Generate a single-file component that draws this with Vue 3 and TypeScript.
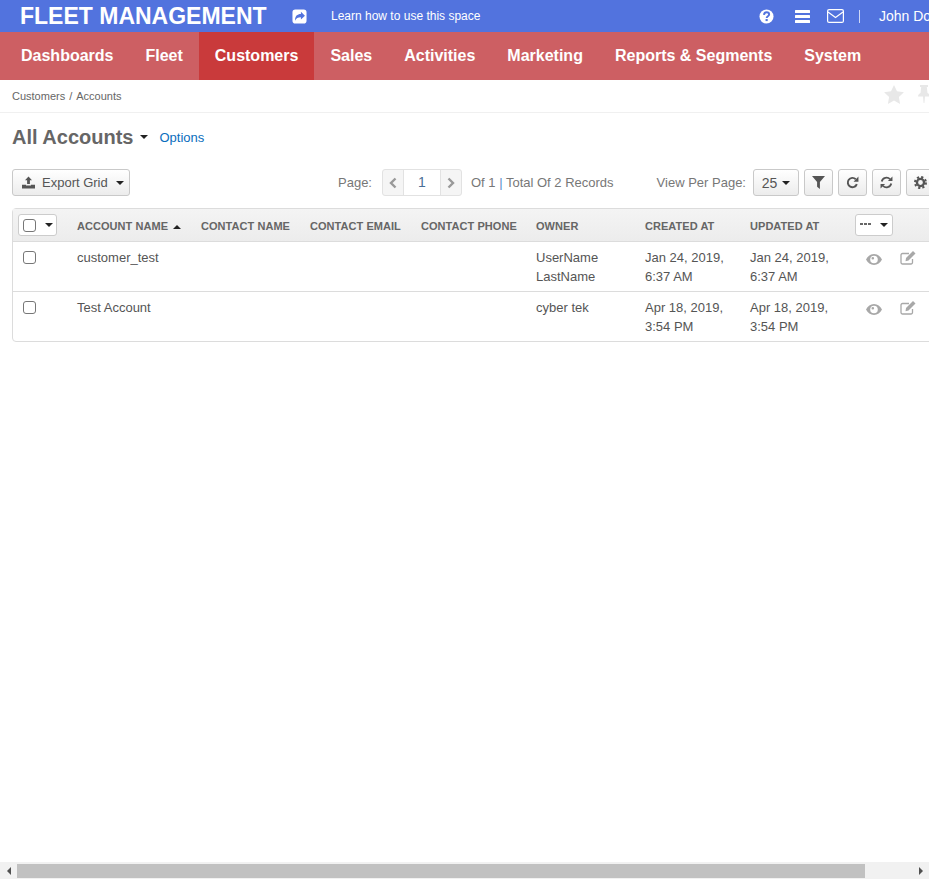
<script setup lang="ts">
interface Account {
  name: string;
  owner: string[];
  created: string[];
  updated: string[];
}

const navItems = ["Dashboards", "Fleet", "Customers", "Sales", "Activities", "Marketing", "Reports & Segments", "System"];
const columns = ["Contact Name", "Contact Email", "Contact Phone", "Owner", "Created At", "Updated At"];

const accounts: Account[] = [
  {
    name: "customer_test",
    owner: ["UserName", "LastName"],
    created: ["Jan 24, 2019,", "6:37 AM"],
    updated: ["Jan 24, 2019,", "6:37 AM"],
  },
  {
    name: "Test Account",
    owner: ["cyber tek"],
    created: ["Apr 18, 2019,", "3:54 PM"],
    updated: ["Apr 18, 2019,", "3:54 PM"],
  },
];
</script>

<template>
  <div class="page">
    <div class="content">
      <header class="topbar">
        <span class="logo">FLEET MANAGEMENT</span>
        <svg class="share" viewBox="0 0 16 16">
          <path fill="#fff" fill-rule="evenodd" d="M3.500 .5h9A3 3 0 0 1 15.500 3.500v9a3 3 0 0 1-3 3h-9a3 3 0 0 1-3-3v-9a3 3 0 0 1 3-3zM9.500 2.800v2.500C5.500 5.400 3.200 7.300 3.200 12.500c1-2.600 3.200-3.800 6.300-3.800v2.600l4.300-4.200z" />
        </svg>
        <span class="learn">Learn how to use this space</span>
        <svg class="help" viewBox="0 0 16 16">
          <circle cx="8" cy="8" r="7.500" fill="#fff" />
          <path d="M5.300 6.200C5.500 4.500 6.700 3.500 8.100 3.500c1.500 0 2.700 1 2.700 2.400 0 1.900-2.600 1.900-2.600 3.700" fill="none" stroke="#5273de" stroke-width="2.100" />
          <rect x="7" y="10.700" width="2.300" height="2.200" fill="#5273de" />
        </svg>
        <svg class="bars" viewBox="0 0 15 13">
          <rect y="0" width="15" height="3" rx=".5" fill="#fff" />
          <rect y="5" width="15" height="3" rx=".5" fill="#fff" />
          <rect y="10" width="15" height="3" rx=".5" fill="#fff" />
        </svg>
        <svg class="mail" viewBox="0 0 17 14">
          <rect x=".6" y=".6" width="15.800" height="12.800" rx="1.500" fill="none" stroke="#fff" stroke-width="1.200" />
          <path d="M1 3l7.500 5.500L16 3" fill="none" stroke="#fff" stroke-width="1.200" />
        </svg>
        <span class="divider"></span>
        <span class="user">John Doe</span>
      </header>

      <nav class="mainnav">
        <a v-for="item in navItems" :key="item" class="navitem" :class="{ active: item === 'Customers' }">{{ item }}</a>
      </nav>

      <div class="crumbs">
        <span>Customers</span>
        <span class="sep">/</span>
        <span>Accounts</span>
        <svg class="star" viewBox="0 0 20 19">
          <path fill="#e8e8e8" d="M10 0l3 6.300 6.900.9-5 4.800 1.200 6.900L10 15.600l-6.100 3.300L5.100 12l-5-4.800 6.900-.9z" />
        </svg>
        <svg class="pin" viewBox="0 0 14 20">
          <path fill="#e8e8e8" d="M3 0h8v2H9.800l.7 6c1.600.8 2.500 2 2.500 3.500H8l-.6 6.500h-.8L6 11.500H1C1 10 1.900 8.800 3.500 8l.7-6H3z" />
        </svg>
      </div>

      <div class="titlebar">
        <h1>All Accounts</h1>
        <span class="caret title-caret"></span>
        <a class="options">Options</a>
      </div>

      <div class="toolbar">
        <button class="btn export">
          <svg class="ico" viewBox="0 0 14 13">
            <path fill="#555" d="M7 0l3.800 4H8.500v4.200h-3V4H3.200zM0 9h4.300v.8h5.400V9H14v4H0z" />
          </svg>
          Export Grid
          <span class="caret"></span>
        </button>

        <span class="label page-label">Page:</span>
        <div class="pager">
          <span class="pager-arrow">
            <svg viewBox="0 0 8 12"><path d="M6.500 1.500L2 6l4.500 4.500" fill="none" stroke="#999" stroke-width="2.400" /></svg>
          </span>
          <span class="pager-num">1</span>
          <span class="pager-arrow">
            <svg viewBox="0 0 8 12"><path d="M1.500 1.500L6 6l-4.500 4.500" fill="none" stroke="#999" stroke-width="2.400" /></svg>
          </span>
        </div>
        <span class="label total">Of 1 <i>|</i> Total Of 2 Records</span>

        <span class="label per-label">View Per Page:</span>
        <button class="btn per">25 <span class="caret"></span></button>
        <button class="btn square">
          <svg class="ico" viewBox="0 0 12 12"><path fill="#555" d="M0 0h12L7.300 5.500V12L4.700 10V5.500z" /></svg>
        </button>
        <button class="btn square">
          <svg class="ico" viewBox="0 0 12 12">
            <path d="M10 7.500A4.300 4.300 0 1 1 9 3" fill="none" stroke="#555" stroke-width="1.800" />
            <path fill="#555" d="M11.500.5v4.700H7z" />
          </svg>
        </button>
        <button class="btn square">
          <svg class="ico" viewBox="0 0 12 12">
            <path d="M1.600 5A4.500 4.500 0 0 1 9.300 3M10.400 7A4.500 4.500 0 0 1 2.700 9" fill="none" stroke="#555" stroke-width="1.700" />
            <path fill="#555" d="M11.500.5v4.200H7.300zM.5 11.500V7.300h4.200z" />
          </svg>
        </button>
        <button class="btn square">
          <svg class="ico" viewBox="0 0 12 12">
            <circle cx="6" cy="6" r="3.300" fill="none" stroke="#555" stroke-width="2.200" />
            <circle cx="6" cy="6" r="5" fill="none" stroke="#555" stroke-width="2" stroke-dasharray="2 1.930" />
          </svg>
        </button>
      </div>

      <div class="grid">
        <div class="row head">
          <div class="cell check">
            <span class="check-drop">
              <span class="box"></span>
              <span class="caret"></span>
            </span>
          </div>
          <div class="cell name label-cell">Account Name <span class="caret up"></span></div>
          <div v-for="col in columns" :key="col" class="cell label-cell">{{ col }}</div>
          <div class="cell acts">
            <span class="more">
              <svg class="dots" viewBox="0 0 11 2">
                <rect width="3" height="2" fill="#666" />
                <rect x="4" width="3" height="2" fill="#666" />
                <rect x="8" width="3" height="2" fill="#666" />
              </svg>
              <span class="caret"></span>
            </span>
          </div>
        </div>

        <div v-for="acc in accounts" :key="acc.name" class="row body">
          <div class="cell check"><span class="box"></span></div>
          <div class="cell name">{{ acc.name }}</div>
          <div class="cell"></div>
          <div class="cell"></div>
          <div class="cell"></div>
          <div class="cell"><div v-for="line in acc.owner" :key="line">{{ line }}</div></div>
          <div class="cell"><div v-for="line in acc.created" :key="line">{{ line }}</div></div>
          <div class="cell"><div v-for="line in acc.updated" :key="line">{{ line }}</div></div>
          <div class="cell acts icons">
            <svg class="eye" viewBox="0 0 16 11">
              <path fill="#a8a8a8" fill-rule="evenodd" d="M8 0c3.500 0 6.300 2.100 8 5.500C14.300 8.900 11.500 11 8 11S1.700 8.900 0 5.500C1.700 2.100 4.500 0 8 0zM8 1.700a3.800 3.800 0 1 0 0 7.600 3.800 3.800 0 0 0 0-7.600zM6.800 3a1.300 1.300 0 1 1 0 2.600 1.300 1.300 0 0 1 0-2.600z" />
            </svg>
            <svg class="edit" viewBox="0 0 16 14">
              <path d="M12.500 8v3.500a1.500 1.500 0 0 1-1.500 1.500H2.500A1.500 1.500 0 0 1 1 11.500V4a1.500 1.500 0 0 1 1.500-1.500H9" fill="none" stroke="#a8a8a8" stroke-width="1.300" />
              <path fill="#a8a8a8" d="M13 0l2.500 2.500L8.500 9.500 5.500 10.300 6 7z" />
            </svg>
          </div>
        </div>
      </div>
    </div>

    <div class="scrollbar">
      <span class="sb-btn"><span class="sb-arrow left"></span></span>
      <span class="sb-track"><span class="sb-thumb"></span></span>
      <span class="sb-btn"><span class="sb-arrow right"></span></span>
    </div>
  </div>
</template>

<style scoped>
.page {
  position: relative;
  width: 929px;
  height: 879px;
  overflow: hidden;
  font-family: "Liberation Sans", Arial, sans-serif;
  color: #555;
  background: #fff;
}

.content {
  width: 980px;
}

.topbar {
  display: flex;
  align-items: center;
  height: 32px;
  background: #5273de;
  color: #fff;
}

.logo {
  margin-left: 20px;
  width: 272px;
  font-size: 23px;
  font-weight: 700;
  white-space: nowrap;
}

.share {
  width: 15px;
  height: 15px;
}

.learn {
  margin-left: 24px;
  width: 428px;
  font-size: 12px;
}

.help {
  width: 15px;
  height: 15px;
}

.bars {
  margin-left: 21px;
  width: 15px;
  height: 13px;
}

.mail {
  margin-left: 17px;
  width: 17px;
  height: 14px;
}

.divider {
  margin-left: 15px;
  width: 1px;
  height: 13px;
  background: #cfd8f6;
}

.user {
  margin-left: 19px;
  font-size: 14px;
}

.mainnav {
  display: flex;
  height: 48px;
  padding-left: 5px;
  background: #cd5f63;
}

.navitem {
  display: flex;
  align-items: center;
  padding: 0 16px;
  font-size: 16px;
  font-weight: 700;
  color: #fff;
  white-space: nowrap;
}

.navitem.active {
  background: #c93a3b;
}

.crumbs {
  display: flex;
  align-items: center;
  gap: 4px;
  height: 32px;
  padding-left: 12px;
  border-bottom: 1px solid #f0f0f0;
  font-size: 11px;
  color: #666;
}

.star {
  margin: -3px 0 0 758px;
  width: 20px;
  height: 19px;
}

.pin {
  margin: -3px 0 0 9px;
  width: 14px;
  height: 20px;
}

.titlebar {
  display: flex;
  align-items: center;
  height: 48px;
  padding-left: 12px;
}

h1 {
  margin: 0;
  font-size: 20px;
  font-weight: 700;
  color: #666;
}

.title-caret {
  margin-left: 6px;
}

.options {
  margin: 1px 0 0 12px;
  font-size: 13px;
  color: #0a6ebd;
}

.caret {
  display: inline-block;
  width: 0;
  height: 0;
  border-left: 4px solid transparent;
  border-right: 4px solid transparent;
  border-top: 4px solid #222;
  vertical-align: middle;
}

.caret.up {
  border-top: 0;
  border-bottom: 4px solid #222;
  margin-left: 2px;
}

.toolbar {
  display: flex;
  align-items: center;
  height: 27px;
  margin-top: 8px;
  padding-left: 12px;
}

.btn {
  display: flex;
  align-items: center;
  justify-content: center;
  box-sizing: border-box;
  height: 27px;
  padding: 0;
  border: 1px solid #c9c9c9;
  border-radius: 3px;
  background: linear-gradient(#fff, #ececec);
  font-family: inherit;
  font-size: 13px;
  color: #555;
}

.export {
  justify-content: flex-start;
  width: 118px;
  padding-left: 9px;
  gap: 7px;
}

.export .caret {
  margin-left: 1px;
}

.ico {
  width: 13px;
  height: 13px;
}

.label {
  font-size: 13px;
  color: #777;
  white-space: nowrap;
}

.label i {
  font-style: normal;
  color: #5b8fc9;
}

.page-label {
  margin-left: 208px;
}

.pager {
  display: flex;
  box-sizing: border-box;
  height: 27px;
  width: 80px;
  margin-left: 10px;
  border: 1px solid #e2e2e2;
  border-radius: 3px;
  background: #f5f5f5;
}

.pager-arrow {
  display: flex;
  align-items: center;
  justify-content: center;
  flex: 1;
}

.pager-arrow svg {
  width: 8px;
  height: 12px;
}

.pager-num {
  width: 36px;
  background: #fff;
  border-left: 1px solid #e2e2e2;
  border-right: 1px solid #e2e2e2;
  text-align: center;
  font-size: 14px;
  line-height: 25px;
  color: #4a6f96;
}

.total {
  margin-left: 9px;
}

.per-label {
  margin-left: 43px;
}

.per {
  width: 46px;
  margin-left: 7px;
  gap: 5px;
  font-size: 14px;
}

.square {
  width: 29px;
  margin-left: 5px;
}

.grid {
  width: 968px;
  margin: 12px 0 0 12px;
  box-sizing: border-box;
  border: 1px solid #dcdcdc;
  border-radius: 4px;
}

.row {
  display: grid;
  grid-template-columns: 64px 124px 109px 111px 115px 109px 105px 105px 1fr;
}

.head {
  height: 33px;
  box-sizing: border-box;
  background: linear-gradient(#f4f4f4, #ececec);
  border-bottom: 1px solid #dcdcdc;
  align-items: center;
  font-size: 11px;
  font-weight: 700;
  letter-spacing: .05px;
  color: #666;
  text-transform: uppercase;
}

.label-cell {
  padding-top: 2px;
}

.body {
  height: 49px;
  box-sizing: border-box;
  padding-top: 6px;
  font-size: 13px;
  line-height: 19px;
  color: #555;
}

.body:nth-child(2) {
  height: 50px;
  border-bottom: 1px solid #dcdcdc;
}

.check {
  padding-left: 10px;
}

.box {
  display: block;
  box-sizing: border-box;
  width: 13px;
  height: 13px;
  margin-top: 3px;
  border: 1px solid #777;
  border-radius: 3px;
  background: #fff;
}

.head .box {
  margin-top: 0;
}

.check-drop {
  display: inline-flex;
  align-items: center;
  gap: 9px;
  box-sizing: border-box;
  width: 39px;
  height: 22px;
  margin-left: -5px;
  padding-left: 4px;
  border: 1px solid #ccc;
  border-radius: 3px;
  background: #fff;
}

.more {
  display: flex;
  align-items: center;
  justify-content: space-between;
  box-sizing: border-box;
  width: 38px;
  height: 22px;
  padding: 0 4px;
  border: 1px solid #ccc;
  border-radius: 3px;
  background: #fff;
}

.dots {
  width: 11px;
  height: 2px;
  margin-bottom: 3px;
}

.icons {
  display: flex;
  gap: 18px;
  padding: 3px 0 0 11px;
}

.eye {
  width: 16px;
  height: 11px;
  margin-top: 3px;
}

.edit {
  width: 16px;
  height: 14px;
}

.scrollbar {
  position: absolute;
  left: 0;
  right: 0;
  bottom: 0;
  display: flex;
  height: 17px;
  background: #f1f1f1;
}

.sb-btn {
  display: flex;
  align-items: center;
  justify-content: center;
  width: 17px;
}

.sb-arrow {
  width: 0;
  height: 0;
  border-top: 4px solid transparent;
  border-bottom: 4px solid transparent;
}

.sb-arrow.left {
  border-right: 4px solid #505050;
}

.sb-arrow.right {
  border-left: 4px solid #505050;
}

.sb-track {
  flex: 1;
  padding: 2px 47px 1px 0;
}

.sb-thumb {
  display: block;
  height: 100%;
  background: #c1c1c1;
}
</style>

<style>
html,
body {
  margin: 0;
  overflow: hidden;
}
</style>
